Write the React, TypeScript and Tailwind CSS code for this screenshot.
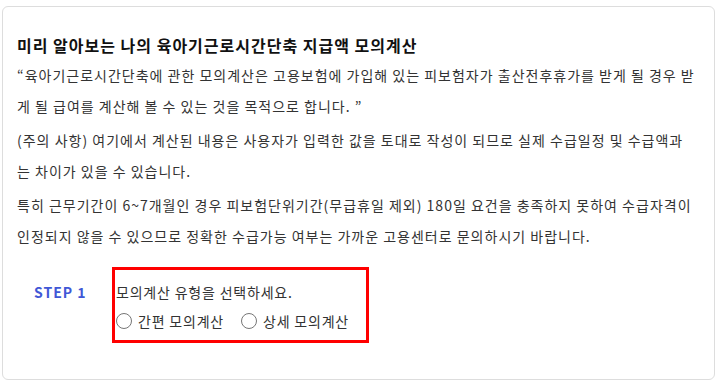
import React, { useState } from 'react';

const FONT = { fontFamily: '"Noto Sans CJK KR", "Noto Sans", sans-serif' };

export default function App() {
  const [mode, setMode] = useState<string>('');

  return (
    <div className="bg-white min-h-screen pt-[6px] pl-[2px] pr-[9px]" style={FONT}>
      <div className="h-[374px] rounded-md border border-[#dddddd] pl-[14px] pr-[19px] pt-[26px]">
        <h2 className="text-[16px] leading-[24px] font-bold tracking-[1px] text-[#111111]">
          미리 알아보는 나의 육아기근로시간단축 지급액 모의계산
        </h2>
        <div className="mt-[3px] text-[14px] leading-[31px] tracking-[1px] text-[#333333] space-y-[3px]">
          <p>
            “육아기근로시간단축에 관한 모의계산은 고용보험에 가입해 있는 피보험자가 출산전후휴가를 받게 될 경우 받게 될 급여를 계산해 볼 수 있는 것을 목적으로 합니다. ”
          </p>
          <p>
            (주의 사항) 여기에서 계산된 내용은 사용자가 입력한 값을 토대로 작성이 되므로 실제 수급일정 및 수급액과는 차이가 있을 수 있습니다.
          </p>
          <p>
            특히 근무기간이 6~7개월인 경우 피보험단위기간(무급휴일 제외) 180일 요건을 충족하지 못하여 수급자격이 인정되지 않을 수 있으므로 정확한 수급가능 여부는 가까운 고용센터로 문의하시기 바랍니다.
          </p>
        </div>

        <div className="mt-[15px] flex items-start">
          <div className="w-[95px] pl-[17px] pt-[13px] text-[14px] leading-[24px] font-bold tracking-[1px] text-[#4057d6]">
            STEP 1
          </div>
          <div className="w-[257px] h-[76px] border-[3px] border-[#ff0000] pl-[1px] pt-[10px] text-[14px] text-[#333333]">
            <p className="leading-[24px] tracking-[0.8px]">모의계산 유형을 선택하세요.</p>
            <div className="mt-[5px] flex items-center gap-[17px] leading-[24px] tracking-[0.8px]">
              {['간편 모의계산', '상세 모의계산'].map((label) => (
                <label key={label} className="flex items-center gap-[6px] cursor-pointer">
                  <input
                    type="radio"
                    name="mode"
                    checked={mode === label}
                    onChange={() => setMode(label)}
                    className="appearance-none w-[16px] h-[16px] m-0 rounded-full border border-[#767676] bg-white checked:border-[5px] checked:border-[#1a73e8]"
                  />
                  <span>{label}</span>
                </label>
              ))}
            </div>
          </div>
        </div>
      </div>
    </div>
  );
}
